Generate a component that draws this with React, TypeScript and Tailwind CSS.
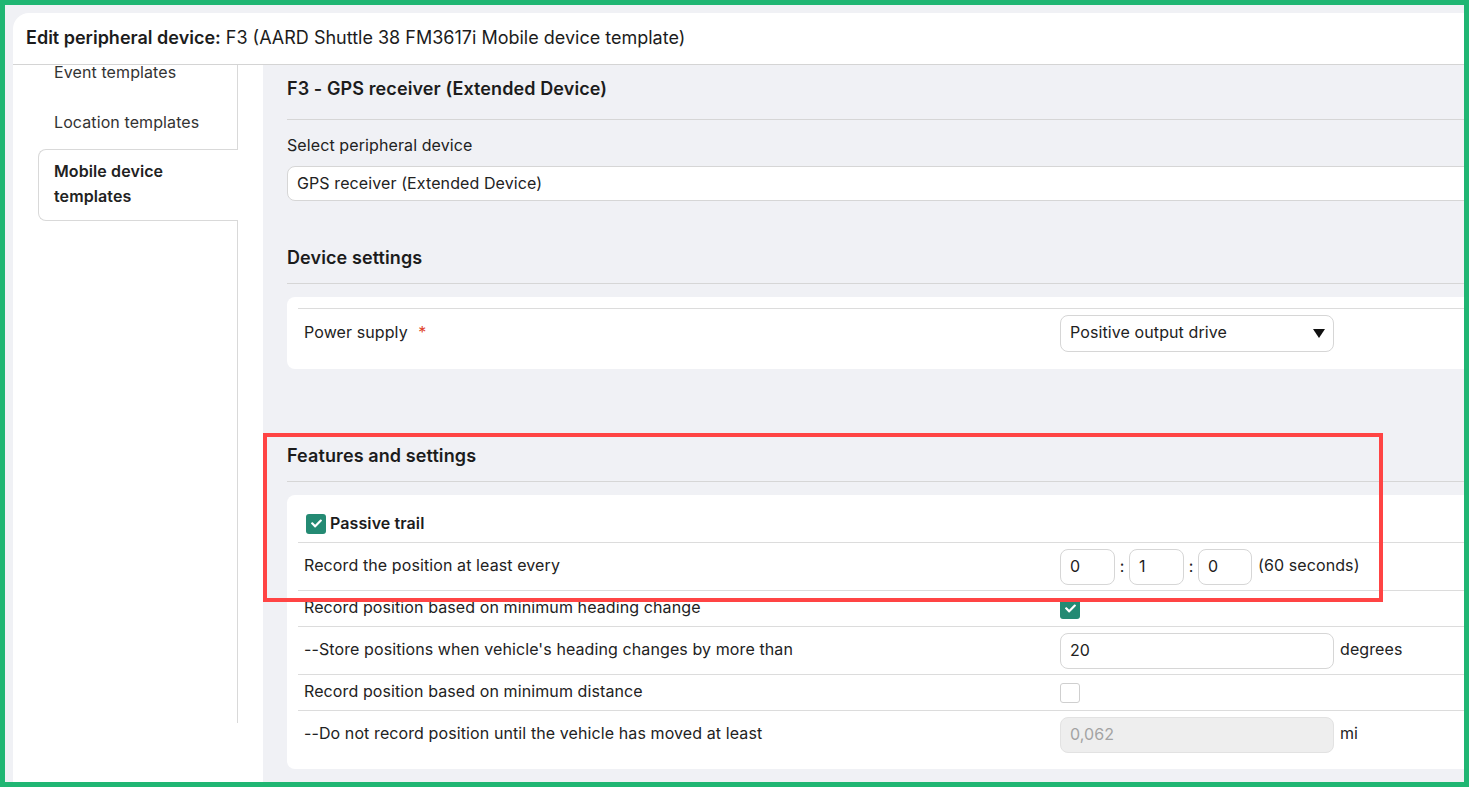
import React from 'react';
import { FaCheck } from 'react-icons/fa';

const font = { fontFamily: 'Inter, "Liberation Sans", sans-serif' };

const Checkbox: React.FC<{ checked?: boolean }> = ({ checked }) =>
  checked ? (
    <span className="w-[20px] h-[20px] rounded-[3px] bg-[#248a73] flex items-center justify-center shrink-0">
      <FaCheck className="text-white" size={11} />
    </span>
  ) : (
    <span className="w-[20px] h-[20px] rounded-[3px] bg-white border border-[#cfcfcf] shrink-0" />
  );

const Row: React.FC<{ label: string; tall?: boolean; children?: React.ReactNode }> = ({ label, tall, children }) => (
  <div className={`flex items-center border-t border-[#dcdcdc] ${tall ? 'h-[48px]' : 'h-[36px]'}`}>
    <div className="w-[762px] pl-[6px] pb-[3px] shrink-0 text-[16px] tracking-[0.1px] text-[#222]">{label}</div>
    <div className="flex items-center">{children}</div>
  </div>
);

const TextInput: React.FC<{ value: string; width: string; disabled?: boolean }> = ({ value, width, disabled }) => (
  <div
    className={`${width} h-[36px] rounded-lg border flex items-center pl-[9px] pb-[2px] text-[16px] tracking-[0.1px] ${
      disabled ? 'bg-[#eeeeee] border-[#e2e2e2] text-[#a3a3a3]' : 'bg-white border-[#d6d6d6] text-[#222]'
    }`}
  >
    {value}
  </div>
);

export default function App() {
  return (
    <div className="w-[1469px] h-[787px] bg-[#20b673] p-[5px]" style={font}>
      <div className="relative w-full h-full bg-[#f0f1f5] overflow-hidden pt-[8px] pl-[8px]">
        <div className="w-[1600px] h-[800px] bg-white rounded-tl-2xl flex flex-col">
          {/* Header */}
          <div className="h-[52px] shrink-0 border-b border-[#d4d4d4] flex items-center pl-[13px] pb-[2px] text-[18px] text-[#1c1c1c]">
            <span className="font-semibold mr-[5px]">Edit peripheral device:</span>
            <span>F3 (AARD Shuttle 38 FM3617i Mobile device template)</span>
          </div>

          <div className="flex flex-1 min-h-0">
            {/* Sidebar */}
            <div className="w-[250px] shrink-0 bg-white pl-[25px]">
              <div className="w-[200px] h-[658px] border-r border-[#d9d9d9] flex flex-col text-[16px] tracking-[0.1px]">
                <div className="h-[33px] pb-[19px] flex items-center pl-[16px] text-[#333]">Event templates</div>
                <div className="h-[51px] pb-[3px] flex items-center pl-[16px] text-[#333]">Location templates</div>
                <div className="-mr-px bg-white border border-r-0 border-[#d9d9d9] rounded-l-lg pt-[9px] pb-[11px] pl-[15px] pr-[20px] leading-[25px] font-semibold text-[#222]">
                  Mobile device templates
                </div>
              </div>
            </div>

            {/* Content */}
            <div className="flex-1 bg-[#f0f1f5] px-[24px]">
              <div className="pt-[12px] pb-[18px] border-b border-[#d6d6d6] text-[18px] tracking-[0.1px] leading-[24px] font-semibold text-[#1c1c1c]">
                F3 - GPS receiver (Extended Device)
              </div>
              <div className="mt-[15px] text-[16px] tracking-[0.1px] leading-[20px] text-[#222]">Select peripheral device</div>
              <div className="mt-[11px] h-[35px] bg-white rounded-lg border border-[#d6d6d6] flex items-center pl-[9px] pb-[2px] text-[16px] tracking-[0.1px] text-[#222]">
                GPS receiver (Extended Device)
              </div>

              <div className="mt-[45px] pb-[13px] border-b border-[#d6d6d6] text-[18px] tracking-[0.1px] leading-[24px] font-semibold text-[#1c1c1c]">
                Device settings
              </div>
              <div className="mt-[13px] bg-white rounded-lg pt-[11px] pb-[12px] px-[11px]">
                <div className="flex items-center border-t border-[#dcdcdc] h-[49px]">
                  <div className="w-[762px] pl-[6px] pb-[3px] shrink-0 text-[16px] tracking-[0.1px] text-[#222]">
                    Power supply <span className="text-[#e0442b] ml-[6px]">*</span>
                  </div>
                  <div className="w-[274px] h-[37px] rounded-lg border border-[#d6d6d6] bg-white flex items-center justify-between pl-[9px] pr-[8px] text-[16px] tracking-[0.1px] text-[#222]">
                    <span className="pb-[2px]">Positive output drive</span>
                    <svg width="12" height="9" viewBox="0 0 12 9">
                      <polygon points="0,0 12,0 6,9" fill="#111" />
                    </svg>
                  </div>
                </div>
              </div>

              <div className="mt-[75px] pb-[13px] border-b border-[#d6d6d6] text-[18px] tracking-[0.1px] leading-[24px] font-semibold text-[#1c1c1c]">
                Features and settings
              </div>
              <div className="mt-[13px] bg-white rounded-lg pb-[11px] px-[11px]">
                <div className="h-[47px] pt-[10px] flex items-center gap-[4px] pl-[8px]">
                  <Checkbox checked />
                  <span className="pb-[2px] text-[16px] tracking-[0.1px] font-semibold text-[#1c1c1c]">Passive trail</span>
                </div>
                <Row label="Record the position at least every" tall>
                  <TextInput value="0" width="w-[55px]" />
                  <span className="w-[14px] pb-[2px] text-center text-[16px] text-[#222]">:</span>
                  <TextInput value="1" width="w-[55px]" />
                  <span className="w-[14px] pb-[2px] text-center text-[16px] text-[#222]">:</span>
                  <TextInput value="0" width="w-[54px]" />
                  <span className="ml-[6px] pb-[3px] text-[16px] tracking-[0.1px] text-[#222]">(60 seconds)</span>
                </Row>
                <Row label="Record position based on minimum heading change">
                  <Checkbox checked />
                </Row>
                <Row label="--Store positions when vehicle's heading changes by more than" tall>
                  <TextInput value="20" width="w-[274px]" />
                  <span className="ml-[6px] pb-[3px] text-[16px] tracking-[0.1px] text-[#222]">degrees</span>
                </Row>
                <Row label="Record position based on minimum distance">
                  <Checkbox />
                </Row>
                <Row label="--Do not record position until the vehicle has moved at least" tall>
                  <TextInput value="0,062" width="w-[274px]" disabled />
                  <span className="ml-[6px] pb-[3px] text-[16px] tracking-[0.1px] text-[#222]">mi</span>
                </Row>
              </div>
            </div>
          </div>
        </div>

        {/* Annotation */}
        <div className="absolute left-[258px] top-[428px] w-[1120px] h-[169px] border-[4px] border-[#ff4444]" />
      </div>
    </div>
  );
}
